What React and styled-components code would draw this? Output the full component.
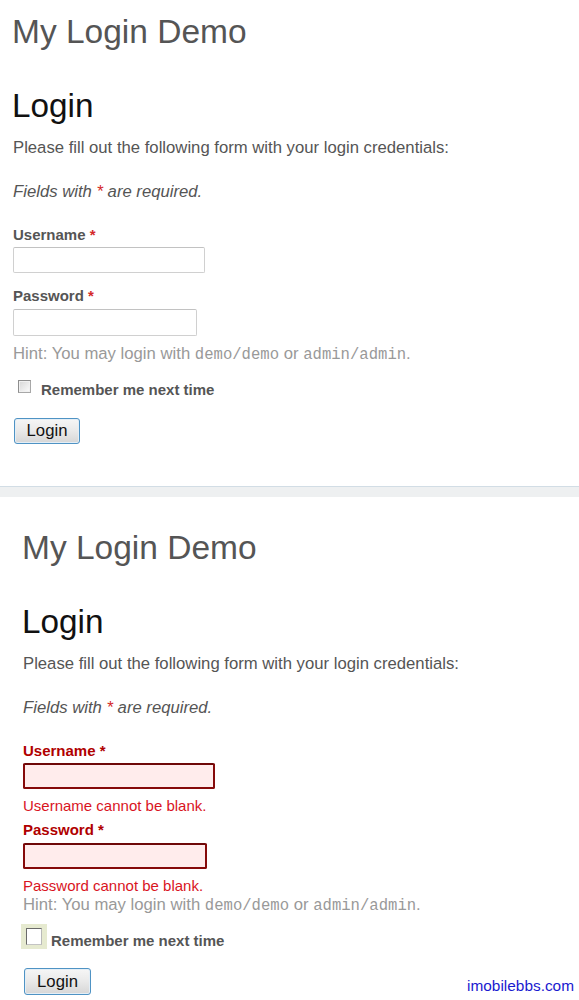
import React from "react";
import styled, { createGlobalStyle } from "styled-components";

const Global = createGlobalStyle`
  html, body { margin: 0; padding: 0; background: #fff; }
  body { font-family: "Liberation Sans", Arial, sans-serif; width: 579px; overflow: hidden; }
  * { box-sizing: border-box; }
`;

const Page = styled.div`
  display: flex;
  flex-direction: column;
  width: 579px;
  height: 1000px;
  overflow: hidden;
`;

const Panel = styled.section`
  display: flex;
  flex-direction: column;
  align-items: flex-start;
  background: #fff;
  padding: ${(p) => p.$top}px 5px 0 ${(p) => p.$left}px;
  height: ${(p) => (p.$height ? `${p.$height}px` : "auto")};
  flex: ${(p) => (p.$height ? "none" : "1")};
`;

const Separator = styled.div`
  height: 11px;
  flex: none;
  border-top: 1px solid #d2dde5;
  background: #eef0f1;
`;

const SiteTitle = styled.div`
  font-size: 33.5px;
  line-height: 40px;
  color: #555;
  margin-left: -1px;
`;

const Heading = styled.h1`
  margin: 34px 0 0 -1px;
  font-size: 33.3px;
  line-height: 40px;
  font-weight: normal;
  color: #111;
`;

const Text = styled.p`
  margin: ${(p) => p.$mt ?? 0}px 0 0;
  font-size: 16.7px;
  line-height: 20px;
  color: ${(p) => (p.$hint ? "#999" : "#555")};
  font-style: ${(p) => (p.$italic ? "italic" : "normal")};
  white-space: nowrap;
`;

const Req = styled.span`
  color: ${(p) => (p.$error ? "#b00000" : "#d42a2a")};
`;

const Code = styled.span`
  font-family: "Liberation Mono", "Courier New", monospace;
  font-size: 15.6px;
`;

const Label = styled.label`
  margin-top: ${(p) => p.$mt}px;
  font-size: 15px;
  line-height: 18px;
  font-weight: bold;
  color: ${(p) => (p.$error ? "#b00000" : "#555")};
`;

const Input = styled.input`
  margin-top: ${(p) => p.$mt}px;
  width: ${(p) => p.$w}px;
  height: ${(p) => p.$h}px;
  border: ${(p) => (p.$error ? "2px solid #860a0a" : "1px solid #d0d0d0")};
  border-top-color: ${(p) => (p.$error ? "#6e0808" : "#c2c2c2")};
  border-radius: 2px;
  background: ${(p) => (p.$error ? "#ffecec" : "#fff")};
  padding: 2px 4px;
  font: inherit;
  outline: none;
`;

const ErrorMessage = styled.div`
  margin-top: 8px;
  font-size: 15px;
  line-height: 18px;
  color: #d9141e;
`;

const CheckRow = styled.div`
  display: flex;
  align-items: flex-end;
  margin-top: ${(p) => p.$mt}px;
`;

const CheckFrame = styled.span`
  display: flex;
  align-items: center;
  justify-content: center;
  flex: none;
  width: ${(p) => (p.$error ? 26 : 13)}px;
  height: ${(p) => (p.$error ? 25 : 13)}px;
  margin: 0 ${(p) => (p.$error ? 4 : 10)}px ${(p) => (p.$error ? 1 : 6)}px
    ${(p) => (p.$error ? -2 : 5)}px;
  background: ${(p) => (p.$error ? "#e6ead0" : "transparent")};
`;

const Box = styled.input.attrs({ type: "checkbox" })`
  appearance: none;
  -webkit-appearance: none;
  margin: 0;
  width: ${(p) => (p.$error ? 16 : 13)}px;
  height: ${(p) => (p.$error ? 17 : 13)}px;
  border: 1px solid ${(p) => (p.$error ? "#6a6a6a" : "#8e8e8e")};
  border-right-color: ${(p) => (p.$error ? "#b9b9b9" : "#a8a8a8")};
  border-bottom-color: ${(p) => (p.$error ? "#c4c4c4" : "#a8a8a8")};
  background: ${(p) =>
    p.$error ? "#fff" : "linear-gradient(135deg, #d6d6d6 0%, #f4f4f4 80%, #fff 100%)"};
  box-shadow: ${(p) => (p.$error ? "none" : "inset 0 0 0 1px #f0f0f0")};
`;

const CheckLabel = styled.span`
  font-size: 15px;
  line-height: 18px;
  font-weight: bold;
  color: #555;
`;

const ButtonRow = styled.div`
  display: flex;
  align-self: stretch;
  justify-content: space-between;
  align-items: flex-end;
  margin-top: ${(p) => p.$mt}px;
`;

const Button = styled.button`
  width: ${(p) => p.$w}px;
  height: ${(p) => p.$h}px;
  margin-left: 1px;
  padding: 0;
  border: 1px solid #4f93c4;
  border-radius: 3px;
  background: linear-gradient(#f6f6f6 0%, #e9e9e9 50%, #d6d6d6 100%);
  box-shadow: inset 0 0 0 1px #e4eef6;
  font-family: "Liberation Sans", Arial, sans-serif;
  font-size: 16.7px;
  color: #111;
`;

const Watermark = styled.span`
  font-size: 15.4px;
  line-height: 18px;
  color: #1a1ad0;
  margin-bottom: 0;
`;

function LoginForm({ error }) {
  return (
    <>
      <SiteTitle>My Login Demo</SiteTitle>
      <Heading>Login</Heading>
      <Text $mt={12}>Please fill out the following form with your login credentials:</Text>
      <Text $mt={23.5} $italic>
        Fields with <Req>*</Req> are required.
      </Text>
      <Label $mt={24.5} $error={error}>
        Username <Req $error={error}>*</Req>
      </Label>
      <Input $mt={2.5} $w={192} $h={26} $error={error} />
      {error && <ErrorMessage>Username cannot be blank.</ErrorMessage>}
      <Label $mt={error ? 6.5 : 14.5} $error={error}>
        Password <Req $error={error}>*</Req>
      </Label>
      <Input type="password" $mt={error ? 4 : 3.5} $w={184} $h={error ? 26 : 27} $error={error} />
      {error && <ErrorMessage>Password cannot be blank.</ErrorMessage>}
      <Text $mt={error ? 0 : 8} $hint>
        Hint: You may login with <Code>demo/demo</Code> or <Code>admin/admin</Code>.
      </Text>
      <CheckRow $mt={error ? 7.5 : 15}>
        <CheckFrame $error={error}>
          <Box $error={error} />
        </CheckFrame>
        <CheckLabel>Remember me next time</CheckLabel>
      </CheckRow>
      <ButtonRow $mt={error ? 18.5 : 19}>
        <Button $w={error ? 67 : 66} $h={error ? 27 : 26}>Login</Button>
        {error && <Watermark>imobilebbs.com</Watermark>}
      </ButtonRow>
    </>
  );
}

export default function App() {
  return (
    <Page>
      <Global />
      <Panel $top={12} $left={13} $height={486}>
        <LoginForm />
      </Panel>
      <Separator />
      <Panel $top={31} $left={23}>
        <LoginForm error />
      </Panel>
    </Page>
  );
}
